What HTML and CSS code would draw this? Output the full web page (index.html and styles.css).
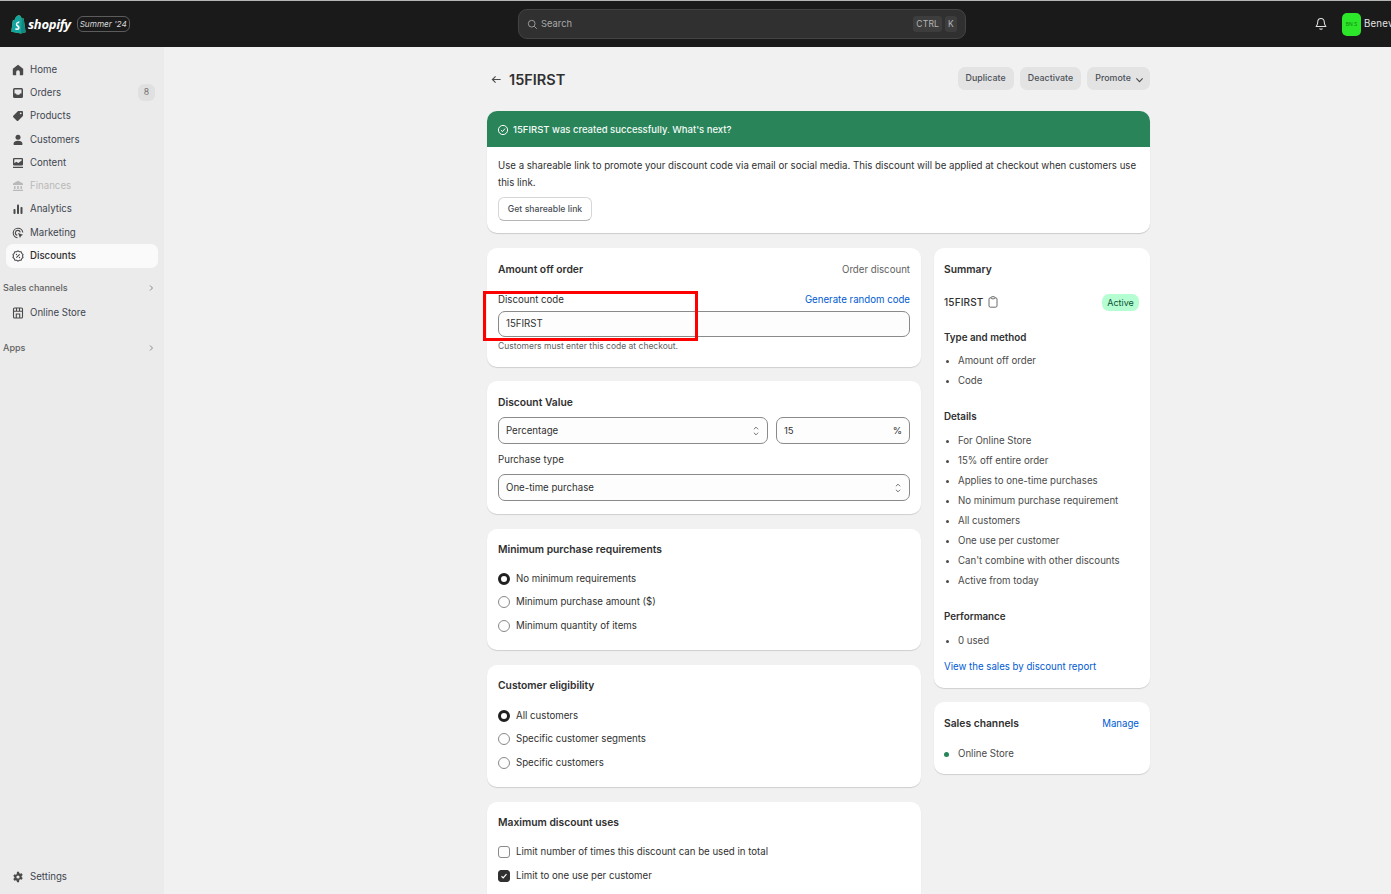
FILE: index.html
```html
<!DOCTYPE html>
<html lang="en">
<head>
<meta charset="utf-8">
<title>15FIRST</title>
<link rel="stylesheet" href="styles.css">
</head>
<body>
<header class="topbar">
  <div class="brand">
    <svg class="bag" viewBox="0 0 16 20"><path fill="#95bf47" d="M12.6 3.8 11 3.3C10.500 1.600 9.500.7 8.300.7 6.200.8 4.600 3 4 5.500L1.900 6.200 .3 18.300 10.600 20l5-1.200L13.500 4z"/><path fill="#0d8a86" d="M12.600 3.800 11 3.300 10.600 20l5-1.200L13.500 4z"/><path fill="#12a5a0" d="M8.300.7C6.200.8 4.600 3 4 5.500L1.900 6.200 .3 18.300 10.600 20 11 3.300C10.500 1.600 9.500.7 8.300.7z"/><path fill="#fff" d="M9 7.500 8.500 9.300c-2-.7-2.700.6-1.500 1.500 1.500 1 2.500 2 2.100 3.700-.5 1.900-2.700 2.500-4.600 1.500l.5-1.700c1.300.8 2.400.5 2.400-.3 0-1.200-2.500-1.500-2.200-4 .3-2.200 2.700-3.300 4.300-2.500z"/></svg>
    <span class="wordmark">shopify</span>
    <span class="season">Summer '24</span>
  </div>
  <div class="search">
    <svg class="ico-search" viewBox="0 0 14 14"><circle cx="6" cy="6" r="4.300"/><path d="m9.300 9.300 3.200 3.200"/></svg>
    <span class="search-text">Search</span>
    <span class="key">CTRL</span><span class="key">K</span>
  </div>
  <div class="account">
    <svg class="bell" viewBox="0 0 14 16"><path d="M7 1.500c-2.500 0-3.800 1.900-3.800 4.200 0 2.500-.6 3.700-1.700 5.300h11c-1.100-1.600-1.700-2.800-1.700-5.300 0-2.300-1.300-4.200-3.800-4.200zM5.300 13.300c.5 1.200 2.900 1.200 3.400 0"/></svg>
    <span class="avatar">BN S</span>
    <span class="store">Benev</span>
  </div>
</header>

<div class="shell">
  <nav class="sidebar">
    <a class="nav-item"><svg class="nav-ico" viewBox="0 0 12 12"><path d="M6 .8 1.200 4.500c-.3.200-.4.500-.4.800V10.500c0 .4.300.7.700.7H4.200V8a1.800 1.800 0 0 1 3.600 0v3.200h2.700c.4 0 .7-.3.700-.7V5.300c0-.3-.1-.6-.4-.8z"/></svg><span>Home</span></a>
    <a class="nav-item"><svg class="nav-ico" viewBox="0 0 12 12"><path fill-rule="evenodd" d="M2.500 1h7A1.500 1.500 0 0 1 11 2.500v7A1.500 1.500 0 0 1 9.500 11h-7A1.500 1.500 0 0 1 1 9.500v-7A1.500 1.500 0 0 1 2.500 1zM2.500 2.500V6.500H4l.7 1.200h2.600L8 6.500h1.500v-4z"/></svg><span>Orders</span><span class="count">8</span></a>
    <a class="nav-item"><svg class="nav-ico" viewBox="0 0 12 12"><path fill-rule="evenodd" d="M6.500 1H10a1 1 0 0 1 1 1v3.500c0 .3-.1.500-.3.700l-4.500 4.500a1 1 0 0 1-1.400 0L1.300 7.200a1 1 0 0 1 0-1.400l4.500-4.500c.2-.2.400-.3.700-.3zM8.700 4.200a.9.900 0 1 0 0-1.800.9.900 0 0 0 0 1.800z"/></svg><span>Products</span></a>
    <a class="nav-item"><svg class="nav-ico" viewBox="0 0 12 12"><circle cx="6" cy="3.300" r="2.500"/><path d="M1.500 10c0-2 2-3.200 4.500-3.200s4.500 1.200 4.500 3.200c0 .7-.4 1-1 1h-7c-.6 0-1-.3-1-1z"/></svg><span>Customers</span></a>
    <a class="nav-item"><svg class="nav-ico" viewBox="0 0 12 12"><path fill-rule="evenodd" d="M2 1h8a1 1 0 0 1 1 1v5.500a1 1 0 0 1-1 1H2a1 1 0 0 1-1-1V2a1 1 0 0 1 1-1zM2.300 2.300v4l2-1.500 2 1.300 3.400-2.600V2.300zM1 9.800h10V11H1z"/></svg><span>Content</span></a>
    <a class="nav-item muted"><svg class="nav-ico" viewBox="0 0 12 12"><path d="M6 .8 11 3.500V5H1V3.500zM2 6h1.500v3H2zM5.200 6h1.600v3H5.200zM8.500 6H10v3H8.500zM1 9.800h10V11H1z"/></svg><span>Finances</span></a>
    <a class="nav-item"><svg class="nav-ico" viewBox="0 0 12 12"><rect x="1.500" y="6" width="2" height="5" rx=".8"/><rect x="5" y="1.500" width="2" height="9.500" rx=".8"/><rect x="8.500" y="4" width="2" height="7" rx=".8"/></svg><span>Analytics</span></a>
    <a class="nav-item"><svg class="nav-ico line" viewBox="0 0 12 12"><path d="M10.800 5.500A4.800 4.800 0 1 0 5.500 10.800"/><path d="M8.300 5.300A2.500 2.500 0 1 0 5.300 8.300"/><path class="solid" d="m6 6 5 1.800-2 1.100-1 2z"/></svg><span>Marketing</span></a>
    <a class="nav-item current"><svg class="nav-ico line" viewBox="0 0 12 12"><path d="M6 .9 7.400 1.800 9.100 1.800 9.700 3.300 11 4.500 10.500 6 11 7.500 9.700 8.700 9.100 10.200 7.400 10.200 6 11.100 4.600 10.200 2.900 10.200 2.300 8.700 1 7.500 1.500 6 1 4.500 2.300 3.300 2.900 1.800 4.600 1.800z"/><path d="m4.300 7.700 3.400-3.400"/><circle class="solid" cx="4.500" cy="4.500" r=".7"/><circle class="solid" cx="7.500" cy="7.500" r=".7"/></svg><span>Discounts</span></a>

    <div class="nav-section first-section"><span>Sales channels</span><svg class="chev" viewBox="0 0 6 8"><path d="m2 1.500 2.500 2.500L2 6.500"/></svg></div>
    <a class="nav-item"><svg class="nav-ico line" viewBox="0 0 12 12"><rect x="1.500" y="1" width="9" height="10" rx="1"/><path d="M1.500 4.300h9M4.500 1v3.300M7.500 1v3.300M4.300 11V7h3.400v4"/></svg><span>Online Store</span></a>
    <div class="nav-section apps-section"><span>Apps</span><svg class="chev" viewBox="0 0 6 8"><path d="m2 1.500 2.500 2.500L2 6.500"/></svg></div>

    <a class="nav-item settings"><svg class="nav-ico" viewBox="0 0 12 12"><path fill-rule="evenodd" d="M5 .8h2l.3 1.500 1 .5 1.400-.6 1 1.700-1.100 1v1.200l1.100 1-1 1.700-1.400-.6-1 .5L7 11.200H5l-.3-1.500-1-.5-1.400.6-1-1.700 1.100-1V5.900l-1.100-1 1-1.700 1.400.6 1-.5zM6 7.600a1.600 1.600 0 1 0 0-3.200 1.600 1.600 0 0 0 0 3.200z"/></svg><span>Settings</span></a>
  </nav>

  <main class="main">
    <div class="page">
      <div class="page-head">
        <svg class="back" viewBox="0 0 12 12"><path d="M10.500 6h-9M5 2.500 1.500 6 5 9.500"/></svg>
        <h1>15FIRST</h1>
        <div class="actions">
          <button class="action">Duplicate</button>
          <button class="action">Deactivate</button>
          <button class="action promote">Promote <svg class="down" viewBox="0 0 10 6"><path d="m1.500 1.300 3.500 3.500 3.500-3.500"/></svg></button>
        </div>
      </div>

      <section class="banner">
        <div class="banner-head">
          <svg class="check-circle" viewBox="0 0 12 12"><circle cx="6" cy="6" r="4.600"/><path d="M4 6.200 5.500 7.600 8 4.600"/></svg>
          <span>15FIRST was created successfully. What's next?</span>
        </div>
        <div class="banner-body">
          <p>Use a shareable link to promote your discount code via email or social media. This discount will be applied at checkout when customers use this link.</p>
          <button class="plain-btn">Get shareable link</button>
        </div>
      </section>

      <div class="columns">
        <div class="left">
          <section class="card code-card">
            <div class="row-between"><h2>Amount off order</h2><span class="subtle">Order discount</span></div>
            <div class="row-between label-row"><label>Discount code</label><a class="link">Generate random code</a></div>
            <div class="input">15FIRST</div>
            <p class="help">Customers must enter this code at checkout.</p>
            <div class="highlight"></div>
          </section>

          <section class="card value-card">
            <h2>Discount Value</h2>
            <div class="value-row">
              <div class="input select">Percentage<svg class="updown" viewBox="0 0 8 14"><path d="M1.500 5 4 2.500 6.500 5M1.500 9 4 11.500 6.500 9"/></svg></div>
              <div class="input pct"><span>15</span><span>%</span></div>
            </div>
            <label class="purchase-label">Purchase type</label>
            <div class="input select">One-time purchase<svg class="updown" viewBox="0 0 8 14"><path d="M1.500 5 4 2.500 6.500 5M1.500 9 4 11.500 6.500 9"/></svg></div>
          </section>

          <section class="card options-card">
            <h2>Minimum purchase requirements</h2>
            <ul class="options">
              <li><span class="radio on"></span>No minimum requirements</li>
              <li><span class="radio"></span>Minimum purchase amount ($)</li>
              <li><span class="radio"></span>Minimum quantity of items</li>
            </ul>
          </section>

          <section class="card options-card eligibility">
            <h2>Customer eligibility</h2>
            <ul class="options">
              <li><span class="radio on"></span>All customers</li>
              <li><span class="radio"></span>Specific customer segments</li>
              <li><span class="radio"></span>Specific customers</li>
            </ul>
          </section>

          <section class="card uses-card">
            <h2>Maximum discount uses</h2>
            <ul class="options">
              <li><span class="box"></span>Limit number of times this discount can be used in total</li>
              <li><span class="box on"><svg viewBox="0 0 12 12"><path d="m3 6.300 2 2 4-4.500"/></svg></span>Limit to one use per customer</li>
            </ul>
          </section>
        </div>

        <aside class="right">
          <section class="card summary">
            <h2>Summary</h2>
            <div class="row-between code-row">
              <span class="code-name">15FIRST <svg class="clip" viewBox="0 0 10 12"><path d="M3 1.800H2.300C1.600 1.800 1 2.300 1 3v7c0 .7.600 1.200 1.300 1.200h5.400c.7 0 1.300-.5 1.300-1.200V3c0-.7-.6-1.200-1.300-1.200H7M3 1.800C3 1 3.500.7 4 .7h2c.5 0 1 .3 1 1.100 0 .6-.5 1-1 1H4c-.5 0-1-.4-1-1z"/></svg></span>
              <span class="status">Active</span>
            </div>
            <h3 class="h-type">Type and method</h3>
            <ul class="bullets tight"><li>Amount off order</li><li>Code</li></ul>
            <h3 class="h-details">Details</h3>
            <ul class="bullets"><li>For Online Store</li><li>15% off entire order</li><li>Applies to one-time purchases</li><li>No minimum purchase requirement</li><li>All customers</li><li>One use per customer</li><li>Can't combine with other discounts</li><li>Active from today</li></ul>
            <h3 class="h-perf">Performance</h3>
            <ul class="bullets"><li>0 used</li></ul>
            <a class="link report">View the sales by discount report</a>
          </section>
          <section class="card channels">
            <div class="row-between"><h2>Sales channels</h2><a class="link">Manage</a></div>
            <div class="channel"><span class="dot"></span>Online Store</div>
          </section>
        </aside>
      </div>
    </div>
  </main>
</div>
</body>
</html>
```
FILE: styles.css
```css
* { box-sizing: border-box; }
html, body { margin: 0; height: 894px; overflow: hidden; }
body { font-family: Inter, "Noto Sans", sans-serif; font-size: 9.670px; line-height: 14px; color: #303030; background: #f1f1f1; }
h1, h2, h3, p, ul { margin: 0; padding: 0; }
ul { list-style: none; }
button { font: inherit; border: 0; padding: 0; }
svg { display: block; flex: none; }

.topbar { height: 47px; background: #1a1a1a; border-top: 1px solid #b5b5b5; display: flex; align-items: center; position: relative; }
.brand { width: 518px; padding-left: 11px; display: flex; align-items: center; flex: none; }
.bag { width: 15px; height: 20px; }
.wordmark { font-family: "Open Sans", sans-serif; font-style: italic; font-weight: 700; font-size: 13px; color: #fff; margin-left: 2px; letter-spacing: -.3px; }
.season { margin-left: 6px; width: 53px; height: 16px; border: 1px solid #5c5c5c; border-radius: 6px; color: #d8d8d8; font-style: italic; font-size: 8.200px; line-height: 14px; white-space: nowrap; text-align: center; }
.search { width: 448px; height: 30px; background: #303030; border: 1px solid #444; border-radius: 9px; display: flex; align-items: center; padding: 0 8px; color: #a8a8a8; flex: none; }
.ico-search { width: 11px; height: 11px; fill: none; stroke: #a8a8a8; stroke-width: 1.100; margin-right: 3px; }
.search-text { flex: 1; font-size: 9.400px; }
.key { background: #3d3d3d; border-radius: 3px; height: 16px; padding: 0 3px; font-size: 8.500px; line-height: 16px; letter-spacing: .2px; margin-left: 3px; color: #b5b5b5; }
.account { display: flex; align-items: center; margin-left: 349px; white-space: nowrap; }
.bell { width: 12px; height: 14px; fill: none; stroke: #e3e3e3; stroke-width: 1.200; }
.avatar { width: 19px; height: 23px; margin-left: 15px; border-radius: 5px; background: #2ce62a; color: #128a12; font-size: 5px; line-height: 23px; text-align: center; }
.store { color: #e3e3e3; margin-left: 3px; letter-spacing: .2px; }

.shell { display: flex; height: 847px; }
.sidebar { width: 164px; flex: none; background: #ebebeb; padding: 11px 6px 5px; display: flex; flex-direction: column; }
.nav-item { height: 23.300px; display: flex; align-items: center; padding: 0 6px; border-radius: 7px; color: #3f4650; flex: none; }
.nav-ico { width: 12px; height: 12px; margin-right: 6px; fill: #4a4a4a; }
.nav-ico.line { fill: none; stroke: #4a4a4a; stroke-width: 1.100; }
.nav-ico .solid { fill: #4a4a4a; stroke: none; }
.count { margin-left: auto; margin-right: -3px; width: 17px; height: 17px; border-radius: 6px; background: #e0e0e0; color: #707070; text-align: center; font-size: 8.700px; line-height: 17px; }
.muted { color: #b9b9b9; }
.muted .nav-ico { fill: #b9b9b9; }
.current { background: #fafafa; color: #303030; font-weight: 500; }
.nav-section { display: flex; align-items: center; justify-content: space-between; margin-left: -3px; padding-right: 4px; height: 14px; font-size: 9px; font-weight: 500; color: #616161; flex: none; }
.first-section { margin-top: 13px; margin-bottom: 7px; }
.apps-section { margin-top: 16px; }
.chev { width: 6px; height: 8px; fill: none; stroke: #8a8a8a; stroke-width: 1; }
.settings { margin-top: auto; }

.main { flex: 1; min-width: 0; padding-left: 323px; }
.page { width: 663px; }
.page-head { height: 64px; display: flex; align-items: center; }
.back { width: 11px; height: 11px; margin-left: 4px; margin-right: 7px; fill: none; stroke: #4a4a4a; stroke-width: 1.200; }
h1 { font-size: 14.500px; font-weight: 600; color: #303030; line-height: 20px; margin-top: 1px; }
.actions { margin-left: auto; display: flex; gap: 6px; margin-top: -2px; }
.action { height: 23px; padding: 0 8px; border-radius: 7px; background: #e3e3e3; color: #4a4f57; font-size: 8.800px; font-weight: 500; display: flex; align-items: center; gap: 4px; letter-spacing: .05px; }
.promote { padding-right: 6px; }
.down { width: 9px; height: 6px; fill: none; stroke: #4a4a4a; stroke-width: 1.200; margin-top: 3px; }

.banner { height: 122px; border-radius: 10px; background: #fff; overflow: hidden; box-shadow: 0 1px 1px rgba(0,0,0,.16); }
.banner-head { height: 36px; background: #29845a; color: #f3fbf6; display: flex; align-items: center; gap: 4px; padding-left: 10px; padding-top: 1px; font-weight: 500; font-size: 9.500px; }
.check-circle { width: 12px; height: 12px; fill: none; stroke: #fff; stroke-width: 1; }
.banner-body { padding: 10px 11px; }
.banner-body p { line-height: 17px; }
.plain-btn { margin-top: 6px; height: 24px; width: 94px; border-radius: 6px; background: #fff; border: 1px solid #d6d6d6; border-bottom-color: #b5b5b5; color: #4a4f57; font-size: 8.700px; font-weight: 500; }

.columns { display: flex; gap: 13px; margin-top: 15px; align-items: flex-start; }
.left { width: 434px; flex: none; display: flex; flex-direction: column; gap: 15px; }
.right { width: 216px; flex: none; display: flex; flex-direction: column; gap: 14px; }
.card { background: #fff; border-radius: 10px; padding: 15px 11px 14px; box-shadow: 0 1px 1px rgba(0,0,0,.14); position: relative; }
h2 { font-size: 10.300px; font-weight: 600; line-height: 12px; margin-bottom: 2px; color: #303030; }
h3 { font-size: 9.800px; font-weight: 600; line-height: 14px; color: #303030; }
.row-between { display: flex; justify-content: space-between; align-items: center; }
.subtle { color: #616161; }
.link { color: #005bd3; }

.code-card { height: 119px; margin-bottom: -1px; }
.label-row { margin-top: 16px; }
.input { height: 26px; border: 1px solid #8a8a8a; border-radius: 7px; background: #fdfdfd; padding: 0 7px; display: flex; align-items: center; margin-top: 4px; }
.help { font-size: 8.500px; line-height: 12px; color: #616161; margin-top: 3px; }
.highlight { position: absolute; left: -4px; top: 43px; width: 215px; height: 50px; border: 3px solid #f00; }

.value-card { height: 133px; }
.value-row { display: flex; gap: 8px; margin-top: 1px; }
.value-row .input { margin-top: 0; }
.value-card h2 { margin-bottom: 9px; }
.select { justify-content: space-between; height: 27px; }
.value-row .select { width: 270px; }
.pct { flex: 1; height: 27px; justify-content: space-between; font-size: 9.500px; }
.updown { width: 8px; height: 12px; fill: none; stroke: #5c5c5c; stroke-width: 1; }
.purchase-label { display: block; margin-top: 9px; margin-bottom: 7px; }

.options-card { height: 121px; padding-top: 14px; }
.eligibility { height: 122px; }
.options { margin-top: 17px; display: flex; flex-direction: column; gap: 9.300px; }
.eligibility .options { margin-top: 18px; }
.options li { display: flex; align-items: center; gap: 6px; height: 14px; }
.radio { width: 12px; height: 12px; border-radius: 50%; border: 1px solid #8a8a8a; background: #fdfdfd; flex: none; }
.radio.on { border: 3.500px solid #1f1f1f; background: #fff; }
.uses-card { height: 120px; padding-top: 14px; }
.uses-card .options { gap: 10px; margin-top: 17px; }
.box { width: 12px; height: 12px; border-radius: 3px; border: 1px solid #8a8a8a; background: #fdfdfd; flex: none; }
.box.on { background: #303030; border-color: #303030; }
.box svg { width: 10px; height: 10px; fill: none; stroke: #fff; stroke-width: 1.400; }

.summary { height: 440px; padding-left: 10px; }
.code-row { margin-top: 18px; height: 18px; }
.code-name { font-weight: 500; font-size: 10px; display: flex; align-items: center; gap: 5px; letter-spacing: .15px; }
.clip { width: 10px; height: 12px; fill: none; stroke: #5c5c5c; stroke-width: .9; }
.status { background: #b4fed2; color: #0c5132; border-radius: 7px; height: 17px; width: 37px; text-align: center; font-size: 9px; line-height: 17px; }
.h-type { margin-top: 20px; }
.bullets { margin-top: 9px; display: flex; flex-direction: column; gap: 6px; }
.bullets li { display: flex; align-items: center; gap: 9px; color: #4a4a4a; height: 14px; }
.bullets li::before { content: ""; width: 3px; height: 3px; border-radius: 50%; background: #4a4a4a; margin-left: 2px; flex: none; }
.h-details { margin-top: 22px; }
.h-details + .bullets { margin-top: 10px; }
.h-perf { margin-top: 22px; }
.h-perf + .bullets { margin-top: 10px; }
.report { display: block; margin-top: 12px; }
.channels { height: 72px; padding-left: 10px; }
.channel { display: flex; align-items: center; gap: 9px; margin-top: 16px; color: #4a4a4a; }
.dot { width: 5px; height: 5px; border-radius: 50%; background: #29845a; }
```
